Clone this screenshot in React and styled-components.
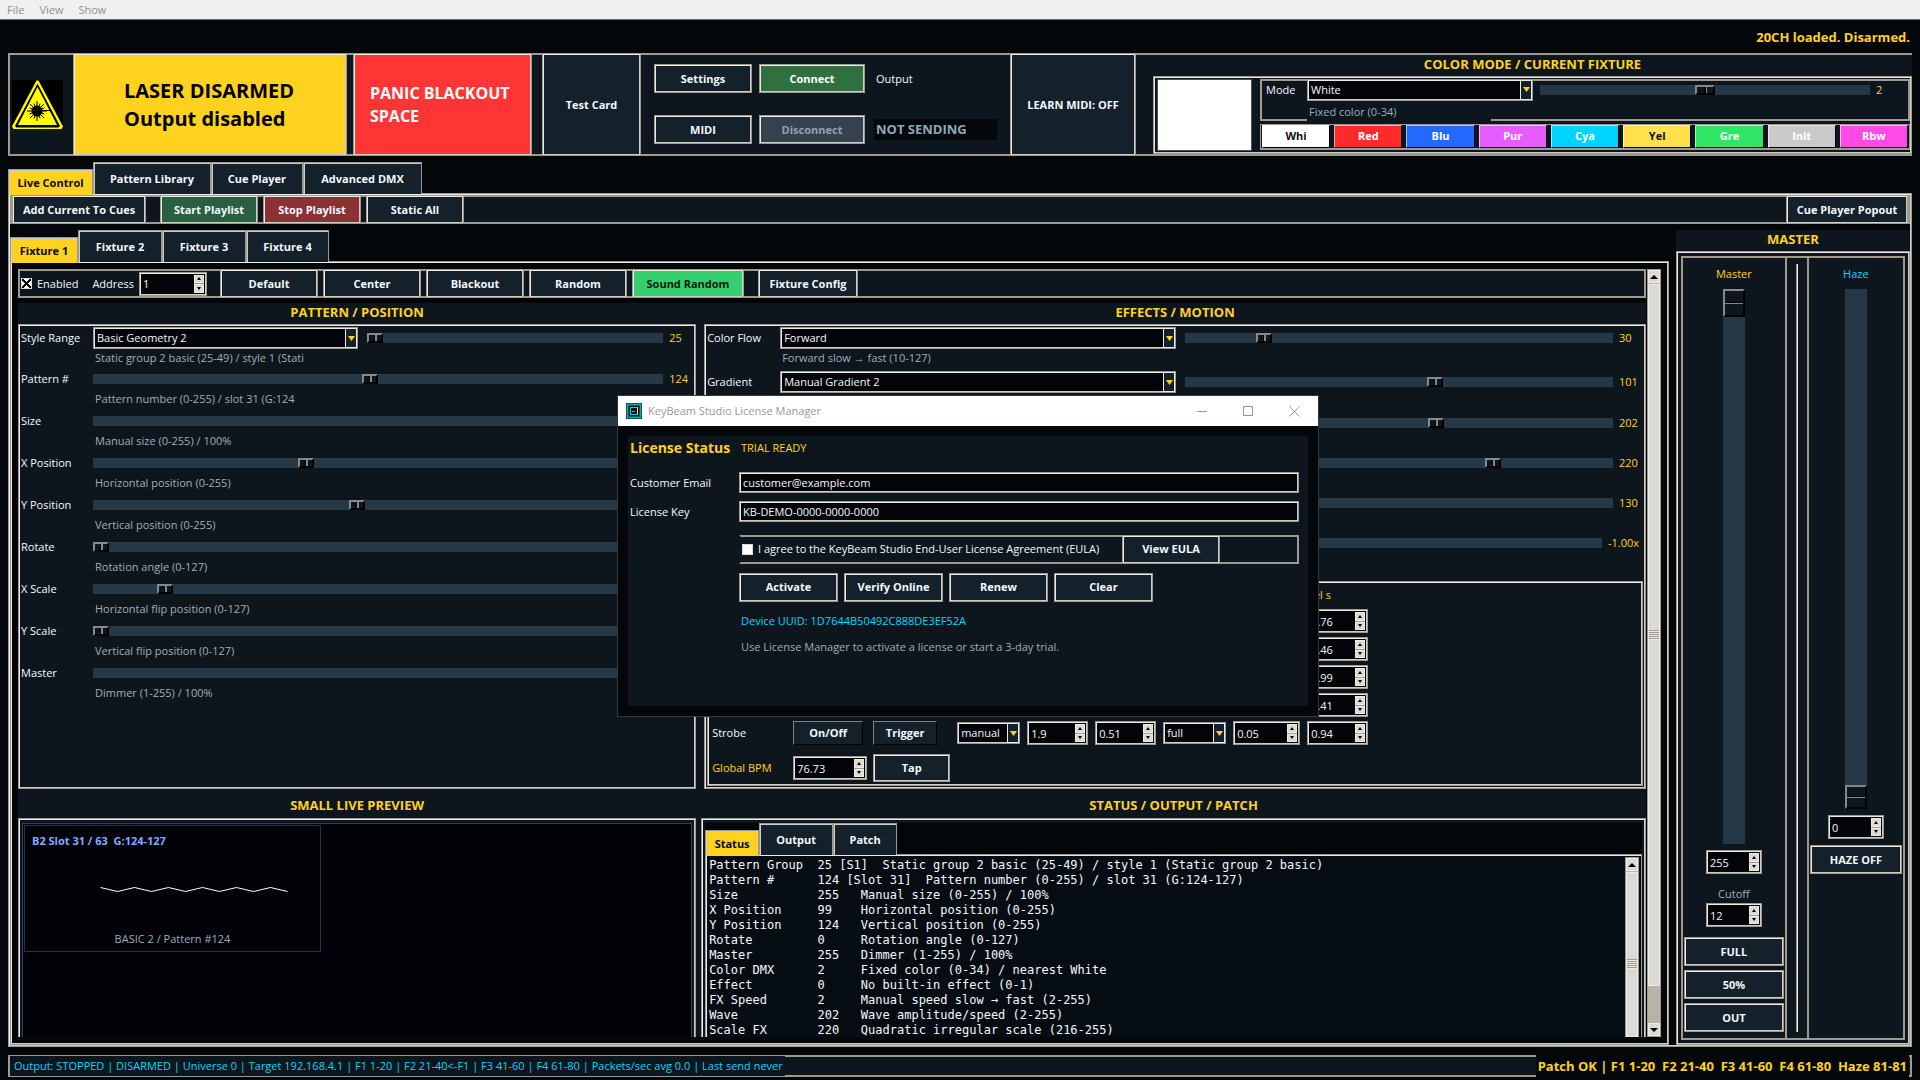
import React, { useId } from "react";
import styled, { createGlobalStyle, css } from "styled-components";

const c = {
  bg: "#03070a",
  panel: "#0e161d",
  field: "#020408",
  button: "#14202a",
  track: "#263746",
  edge: "#9e9a91",
  light: "#eeebe7",
  shade: "#cfcdc8",
  scroll: "#dcdad5",
  text: "#f2f9fd",
  muted: "#9dafbb",
  yellow: "#ffd21f",
  cyan: "#00d8ff",
};

const Global = createGlobalStyle`
  *, *::before, *::after { box-sizing: border-box; }
  body { margin: 0; background: ${c.bg}; overflow: hidden; }
  body, button, input, select, textarea {
    font-family: "Open Sans", "Noto Sans", sans-serif;
    font-size: 11px;
    line-height: 16px;
    color: ${c.text};
  }
`;

const bevel = css`
  border: 1px solid ${c.edge};
  box-shadow: inset 1px 1px ${c.light}, inset -1px -1px ${c.shade};
`;

const Page = styled.div`
  height: 100vh;
  display: flex;
  flex-direction: column;
`;

const MenuBar = styled.nav`
  height: 20px;
  display: flex;
  gap: 15px;
  padding: 0 7px;
  background: #f0f0f0;
  border-bottom: 1px solid #6d7271;
`;

const MenuItem = styled.button`
  border: 0;
  padding: 0;
  background: none;
  color: #8f8f8f;
`;

const LoadState = styled.div`
  height: 33px;
  padding: 9px 10px 0;
  text-align: right;
  font-size: 13px;
  font-weight: 700;
  color: ${c.yellow};
`;

const Header = styled.header`
  height: 103px;
  flex: none;
  margin: 0 8px;
  display: flex;
  background: ${c.panel};
  border: 2px solid ${c.edge};
`;

const Button = styled.button`
  ${bevel}
  height: ${(p) => p.$h || 28}px;
  width: ${(p) => (p.$w ? p.$w + "px" : "auto")};
  flex: none;
  padding: 0 4px;
  background: ${(p) => p.$bg || c.button};
  color: ${(p) => p.$fg || c.text};
  font-weight: 700;
  white-space: nowrap;
`;

const FlatButton = styled(Button)`
  border: 1px solid;
  border-color: #7c858b #000 #000 #7c858b;
  box-shadow: none;
`;

const LogoCell = styled.div`
  width: 63px;
  display: flex;
  align-items: center;
  padding-left: 2px;
`;

const BigButton = styled(Button)`
  height: auto;
  margin: -2px ${(p) => p.$gap || 0}px -2px 0;
`;

const ArmButton = styled(BigButton)`
  padding: 0 0 0 50px;
  text-align: left;
  font-size: 20px;
  line-height: 28px;
`;

const PanicButton = styled(BigButton)`
  padding: 0 0 0 16px;
  text-align: left;
  font-size: 16px;
  line-height: 23px;
`;

const OutputGrid = styled.div`
  width: 369px;
  display: grid;
  grid-template-columns: 98px 106px 125px;
  grid-template-rows: 29px 29px;
  gap: 22px 7px;
  align-items: center;
  padding: 9px 0 0 13px;
`;

const OutputLabel = styled.span`
  padding-left: 4px;
`;

const OutputState = styled.output`
  margin-left: 2px;
  height: 21px;
  padding-left: 2px;
  line-height: 21px;
  font-size: 13px;
  font-weight: 700;
  background: ${c.bg};
  color: #8fa9b8;
`;

const ColorPanel = styled.section`
  flex: 1;
  min-width: 0;
  padding-left: 17px;
  margin-right: -2px;
  display: flex;
  flex-direction: column;
`;

const Title = styled.h2`
  margin: 0;
  height: ${(p) => p.$h || 21}px;
  line-height: ${(p) => p.$lh || 18}px;
  text-align: center;
  font-size: 13px;
  font-weight: 700;
  color: ${c.yellow};
  background: ${c.panel};
`;

const ColorFrame = styled.div`
  ${bevel}
  height: 79px;
  display: flex;
  gap: 8px;
  padding: 2px 1px 2px 3px;
`;

const ColorSample = styled.div`
  width: 95px;
  background: #fff;
  border: 1px solid #3b5566;
`;

const ColorControls = styled.div`
  flex: 1;
  display: flex;
  flex-direction: column;
  gap: 3px;
`;

const ModeFrame = styled.div`
  height: 42px;
  border: 2px solid ${c.edge};
`;

const ModeRow = styled.div`
  display: grid;
  grid-template-columns: 45px 226px 1fr 38px;
  align-items: center;
  height: 22px;
  margin-top: -2px;
`;

const ModeLabel = styled.label`
  padding-left: 4px;
`;

const ModeHint = styled.div`
  position: relative;
  width: 184px;
  height: 20px;
  margin-left: 45px;
  padding-left: 2px;
  line-height: 22px;
  color: ${c.muted};
  background: ${c.panel};
`;

const SliderSlot = styled.div`
  padding-left: 7px;
`;

const Swatches = styled.div`
  height: 26px;
  display: flex;
  gap: 4px;
  padding: 0 1px;
  border: 1px solid ${c.edge};
  border-bottom-width: 2px;
`;

const Swatch = styled.button`
  flex: 1;
  padding: 0;
  font-weight: 700;
  background: ${(p) => p.$bg};
  color: ${(p) => p.$fg || "#fff"};
  border: 1px solid;
  border-color: #ffffff99 #000 #000 #ffffff99;
`;

/* Notebook tabs */
const Tabs = styled.div`
  display: flex;
  align-items: flex-end;
  height: 31px;
`;

const Tab = styled.button`
  height: ${(p) => (p.$on ? 26 : 32)}px;
  width: ${(p) => p.$w}px;
  padding: 0;
  margin-bottom: ${(p) => (p.$on ? -2 : -1)}px;
  position: relative;
  z-index: ${(p) => (p.$on ? 1 : 0)};
  border: 1px solid ${c.edge};
  border-bottom: 0;
  box-shadow: inset 1px 1px ${c.shade};
  font-weight: 700;
  background: ${(p) => (p.$on ? c.yellow : c.button)};
  color: ${(p) => (p.$on ? "#0a0a0a" : c.text)};
`;

const Notebook = styled.main`
  flex: 1;
  min-height: 0;
  margin: 6px 8px 8px;
  display: flex;
  flex-direction: column;
`;

const NotebookBody = styled.div`
  ${bevel}
  flex: 1;
  min-height: 0;
  display: flex;
  flex-direction: column;
  padding: 1px;
`;

const Toolbar = styled.div`
  height: 29px;
  flex: none;
  display: flex;
  background: ${c.panel};
  border: 2px solid ${c.edge};
  & > button { margin-top: -2px; margin-bottom: -2px; height: 29px; }
`;

const Gap = styled.div`
  flex: ${(p) => (p.$w ? "none" : 1)};
  width: ${(p) => p.$w || 0}px;
`;

const Work = styled.div`
  flex: 1;
  min-height: 0;
  display: flex;
  gap: 7px;
  padding-top: 6px;
`;

const FixtureBook = styled.div`
  flex: 1;
  min-width: 0;
  display: flex;
  flex-direction: column;
`;

const FixtureBody = styled.div`
  ${bevel}
  flex: 1;
  min-height: 0;
  display: flex;
  gap: 1px;
  padding: 7px;
`;

const Scrolled = styled.div`
  flex: 1;
  min-width: 0;
  display: flex;
  flex-direction: column;
  overflow: hidden;
`;

const CheckLabel = styled.label`
  display: flex;
  align-items: center;
  gap: 5px;
  padding-left: 1px;
  white-space: nowrap;
`;

const Check = styled.input`
  appearance: none;
  margin: 0;
  width: 11px;
  height: 11px;
  background: #fff;
  border: 1px solid ${c.scroll};
  &:checked {
    background:
      linear-gradient(45deg, transparent 40%, #000 40% 60%, transparent 60%),
      linear-gradient(-45deg, #fff 40%, #000 40% 60%, #fff 60%);
  }
`;

const FieldLine = styled.div`
  display: flex;
  align-items: center;
  gap: 5px;
`;

const Quadrants = styled.div`
  flex: 1;
  min-height: 0;
  margin-top: 5px;
  display: grid;
  grid-template-columns: 18fr 25fr;
  grid-template-rows: 486px 1fr;
  column-gap: 8px;
  background: ${c.panel};
`;

const Quadrant = styled.section`
  min-width: 0;
  min-height: 0;
  display: flex;
  flex-direction: column;
`;

const StatusQuadrant = styled(Quadrant)`
  margin-left: -3px;
`;

const Frame = styled.div`
  ${bevel}
  flex: 1;
  min-height: 0;
  padding: 1px;
  display: flex;
  flex-direction: column;
`;

const OpenFrame = styled(Frame)`
  border-bottom: 0;
  box-shadow: inset 1px 1px ${c.light}, inset -1px 0 ${c.shade};
  padding: 4px 3px 0;
`;

const Row = styled.div`
  height: ${(p) => p.$h || 42}px;
  flex: none;
  display: grid;
  grid-template-columns: ${(p) => p.$label || 73}px ${(p) => (p.$pick ? p.$pick + "px 9px" : "")} 1fr ${(p) => p.$val || 31}px;
  grid-template-rows: 24px 16px;
  align-items: center;
`;

const RowHint = styled.div`
  grid-column: 2 / -1;
  padding-left: 2px;
  white-space: nowrap;
  color: ${c.muted};
`;

const RowLabel = styled.label`
  padding-left: 1px;
  white-space: nowrap;
`;

const GoldLabel = styled.label`
  white-space: nowrap;
  color: ${c.yellow};
`;

const Value = styled.span`
  padding-left: 6px;
  color: ${c.yellow};
  white-space: nowrap;
`;

const thumb = css`
  appearance: none;
  border: 2px solid;
  border-color: #85898c #000 #000 #85898c;
  border-radius: 0;
`;

const HRange = styled.input`
  appearance: none;
  display: block;
  width: 100%;
  min-width: 0;
  height: 10px;
  margin: 0;
  background: ${c.track};
  &::-webkit-slider-thumb {
    ${thumb}
    width: ${(p) => p.$thumb || 16}px;
    height: 10px;
    background: linear-gradient(90deg, transparent 45%, #000 45% 54%, #85898c 54% 63%, transparent 63%) ${c.panel};
  }
`;

const VRange = styled.input`
  appearance: none;
  writing-mode: vertical-lr;
  direction: rtl;
  flex: 1;
  min-height: 0;
  width: 22px;
  margin: 0;
  background: ${c.track};
  &::-webkit-slider-thumb {
    ${thumb}
    width: 22px;
    height: ${(p) => p.$thumb}px;
    background: linear-gradient(transparent 45%, #000 45% 50%, #85898c 50% 55%, transparent 55%) ${c.panel};
  }
`;

const SelectBox = styled.div`
  ${bevel}
  position: relative;
  width: ${(p) => (p.$w ? p.$w + "px" : "100%")};
  height: 22px;
  background: ${c.field};
  & > select {
    appearance: none;
    width: 100%;
    height: 20px;
    border: 0;
    padding: 0 14px 0 3px;
    background: none;
    outline: 0;
  }
  & > span {
    position: absolute;
    top: 0;
    right: 0;
    width: 12px;
    height: 20px;
    display: grid;
    place-items: center;
    background: ${c.button};
    border: 1px solid ${c.light};
    pointer-events: none;
  }
`;

const Pick = ({ id, value, w, label }) => (
  <SelectBox $w={w}>
    <select id={id} aria-label={label} defaultValue={value}>
      <option>{value}</option>
    </select>
    <span>
      <svg width="7" height="5" viewBox="0 0 7 5"><path d="M0 0h7L3.5 5z" fill={c.yellow} /></svg>
    </span>
  </SelectBox>
);

const SpinBox = styled.div`
  ${bevel}
  width: ${(p) => p.$w}px;
  height: 24px;
  flex: none;
  display: flex;
  padding: 2px;
  background: ${c.field};
  & > input {
    flex: 1;
    min-width: 0;
    width: 0;
    height: 18px;
    border: 0;
    padding: 0 1px;
    background: none;
    outline: 0;
  }
`;

const SpinArrows = styled.div`
  width: 10px;
  display: flex;
  flex-direction: column;
  gap: 1px;
  background: ${c.edge};
  & > button {
    flex: 1;
    display: grid;
    place-items: center;
    padding: 0;
    border: 1px solid ${c.light};
    background: ${c.scroll};
  }
`;

const Spin = ({ id, value, w, label }) => (
  <SpinBox $w={w}>
    <input id={id} aria-label={label} defaultValue={value} />
    <SpinArrows>
      <button aria-label="Increase"><svg width="4" height="3" viewBox="0 0 4 3"><path d="M0 3h4L2 0z" /></svg></button>
      <button aria-label="Decrease"><svg width="4" height="3" viewBox="0 0 4 3"><path d="M0 0h4L2 3z" /></svg></button>
    </SpinArrows>
  </SpinBox>
);

const ScrollBar = styled.div`
  width: 14px;
  flex: none;
  display: flex;
  flex-direction: column;
  background: #b8b3a8;
  border: 1px solid ${c.edge};
  border-bottom-width: ${(p) => (p.$cut ? 0 : 1)}px;
`;

const ScrollArrow = styled.button`
  height: 13px;
  padding: 0;
  display: grid;
  place-items: center;
  background: ${c.scroll};
  border: 1px solid ${c.light};
`;

const ScrollThumb = styled.div`
  flex: 1;
  margin: 1px 0 ${(p) => p.$rest}px;
  display: grid;
  justify-items: center;
  align-items: start;
  padding-top: ${(p) => p.$grip}px;
  background: ${c.scroll};
  border: 1px solid ${c.light};
  &::after {
    content: "";
    width: 100%;
    height: 10px;
    background: repeating-linear-gradient(${c.edge} 0 1px, ${c.light} 1px 2px);
  }
`;

const Arrow = ({ down }) => (
  <svg width="8" height="4" viewBox="0 0 8 4"><path d={down ? "M0 0h8L4 4z" : "M0 4h8L4 0z"} /></svg>
);

const Envelope = styled.div`
  ${bevel}
  flex: 1;
  margin: 10px 1px 1px;
  padding: 2px 4px 0;
`;

const EnvelopeGrid = styled.div`
  display: grid;
  grid-template-columns: 81px 80px 84px 70px 68px 68px 70px 74px 61px;
  grid-template-rows: 21px repeat(5, 24px);
  row-gap: 4px;
  align-items: center;
`;

const TempoRow = styled.div`
  display: grid;
  grid-template-columns: 81px 80px 77px;
  align-items: center;
  margin-top: 9px;
`;

const LastColumn = styled.div`
  grid-column: 9;
  color: ${c.yellow};
  white-space: nowrap;
`;

const Canvas = styled.div`
  flex: 1;
  min-height: 0;
  padding: 1px;
  background: #000208;
  border: 1px solid #2c4256;
  border-bottom: 0;
`;

const SlotCard = styled.figure`
  width: 297px;
  height: 127px;
  margin: 0;
  padding: 7px 7px 4px;
  border: 1px solid #22344a;
  display: flex;
  flex-direction: column;
  justify-content: space-between;
`;

const SlotName = styled.div`
  white-space: pre;
  font-weight: 700;
  color: #82acff;
`;

const SlotCaption = styled.figcaption`
  text-align: center;
  color: ${c.muted};
`;

const StatusBook = styled.div`
  flex: 1;
  min-height: 0;
  display: flex;
  flex-direction: column;
  background: ${c.bg};
`;

const LogBody = styled.div`
  flex: 1;
  min-height: 0;
  display: flex;
  border: 1px solid ${c.edge};
  border-bottom: 0;
  box-shadow: inset 1px 1px ${c.light};
  padding: 2px 2px 0 2px;
  background: #050c12;
`;

const Log = styled.pre`
  flex: 1;
  min-width: 0;
  margin: 0;
  padding: 1px 0 0 1px;
  overflow: hidden;
  font-family: "DejaVu Sans Mono", "Liberation Mono", monospace;
  font-size: 12px;
  line-height: 15px;
`;

const MasterPanel = styled.aside`
  width: 234px;
  flex: none;
  display: flex;
  flex-direction: column;
`;

const MasterFrame = styled.div`
  ${bevel}
  flex: 1;
  min-height: 0;
  padding: 4px;
  display: flex;
  background: ${c.panel};
`;

const Strip = styled.div`
  flex: ${(p) => p.$grow};
  display: flex;
  flex-direction: column;
  align-items: center;
  padding: 8px 1px ${(p) => p.$bottom}px;
  border: 2px solid ${c.edge};
  & > button { width: 100%; height: 29px; }
`;

const StripLabel = styled.label`
  color: ${(p) => p.$fg};
  margin-bottom: ${(p) => p.$gap}px;
`;

const Space = styled.div`
  height: ${(p) => p.$h}px;
  flex: none;
`;

const Divider = styled.div`
  width: 20px;
  padding: 6px 9px;
  border: solid ${c.edge};
  border-width: 2px 0;
  &::before {
    content: "";
    display: block;
    width: 2px;
    height: 100%;
    background: ${c.light};
    border-left: 1px solid ${c.edge};
  }
`;

const Footer = styled.footer`
  height: 22px;
  flex: none;
  margin: 0 8px 3px;
  display: flex;
  justify-content: space-between;
  background: ${c.panel};
  border: 2px solid ${c.edge};
`;

const FooterLeft = styled.div`
  margin: -1px 0;
  padding: 0 2px 0 4px;
  line-height: 20px;
  color: ${c.cyan};
  background: ${c.panel};
`;

const FooterRight = styled.div`
  margin: -2px 1px -2px 0;
  padding: 0 2px;
  line-height: 22px;
  white-space: pre;
  font-size: 13px;
  font-weight: 700;
  color: ${c.yellow};
  background: ${c.bg};
`;

/* License window */
const Dialog = styled.div`
  position: absolute;
  left: 617px;
  top: 395px;
  width: 702px;
  height: 322px;
  display: flex;
  flex-direction: column;
  background: ${c.bg};
  border: 1px solid #33383c;
`;

const TitleBar = styled.div`
  height: 30px;
  display: flex;
  align-items: center;
  padding-left: 8px;
  gap: 6px;
  background: #fff;
  color: #999;
`;

const WindowButtons = styled.div`
  display: flex;
  padding-right: 1px;
  & > button {
    width: 46px;
    height: 30px;
    padding: 0;
    border: 0;
    background: none;
    display: grid;
    place-items: center;
  }
`;

const DialogBody = styled.div`
  flex: 1;
  margin: 10px;
  padding: 0 9px 0 2px;
  background: ${c.panel};
  display: grid;
  grid-template-columns: 109px 1fr;
  grid-template-rows: 32px 29px 29px 46px 30px 38px 14px;
  align-items: center;
  align-content: start;
`;

const DialogHeading = styled.h1`
  margin: 0 0 8px;
  font-size: 14px;
  line-height: 24px;
  font-weight: 700;
  color: ${c.yellow};
  white-space: nowrap;
`;

const DialogText = styled.div`
  grid-column: 2;
  padding-left: 2px;
  color: ${(p) => p.$fg};
`;

const TrialState = styled(DialogText)`
  margin-bottom: 8px;
`;

const TextField = styled.input`
  ${bevel}
  height: 21px;
  padding: 0 3px;
  background: ${c.field};
  outline: 0;
`;

const AgreeRow = styled(Toolbar)`
  grid-column: 2;
  border-left-color: ${c.panel};
`;

const ButtonRow = styled.div`
  grid-column: 2;
  display: flex;
  gap: 6px;
`;

const SliderRow = ({ label, pick, value, hint, h, min = 0, max = 255, at, hideLabel, pickWidth, labelWidth, valWidth }) => {
  const id = useId();
  const named = !pick && !hideLabel;
  return (
    <Row $h={h} $pick={pick ? pickWidth : 0} $label={labelWidth} $val={valWidth}>
      {hideLabel ? <span /> : <RowLabel htmlFor={id}>{label}</RowLabel>}
      {pick && <Pick id={id} value={pick} />}
      {pick && <span />}
      <HRange id={named ? id : undefined} aria-label={named ? undefined : label}
        type="range" min={min} max={max} defaultValue={at} />
      <Value>{value}</Value>
      {hint && <RowHint>{hint}</RowHint>}
    </Row>
  );
};

const swatches = [
  ["Whi", "#ffffff", "#111"], ["Red", "#ff2a2a"], ["Blu", "#2469ff"], ["Pur", "#e65cff"], ["Cya", "#00d4ff"],
  ["Yel", "#ffe14a", "#111"], ["Gre", "#30e667"], ["Init", "#c9c9c9"], ["Rbw", "#ff4ae6"],
];

const positionRows = [
  { label: "Pattern #", at: 124, value: "124", hint: "Pattern number (0-255) / slot 31 (G:124" },
  { label: "Size", at: 255, hint: "Manual size (0-255) / 100%" },
  { label: "X Position", at: 99, max: 267, hint: "Horizontal position (0-255)" },
  { label: "Y Position", at: 124, max: 268, hint: "Vertical position (0-255)" },
  { label: "Rotate", at: 0, max: 127, hint: "Rotation angle (0-127)" },
  { label: "X Scale", at: 15, max: 130, hint: "Horizontal flip position (0-127)" },
  { label: "Y Scale", at: 0, max: 127, hint: "Vertical flip position (0-127)" },
  { label: "Master", at: 255, hint: "Dimmer (1-255) / 100%" },
];

const log = `Pattern Group  25 [S1]  Static group 2 basic (25-49) / style 1 (Static group 2 basic)
Pattern #      124 [Slot 31]  Pattern number (0-255) / slot 31 (G:124-127)
Size           255   Manual size (0-255) / 100%
X Position     99    Horizontal position (0-255)
Y Position     124   Vertical position (0-255)
Rotate         0     Rotation angle (0-127)
Master         255   Dimmer (1-255) / 100%
Color DMX      2     Fixed color (0-34) / nearest White
Effect         0     No built-in effect (0-1)
FX Speed       2     Manual speed slow → fast (2-255)
Wave           202   Wave amplitude/speed (2-255)
Scale FX       220   Quadratic irregular scale (216-255)`;

const rays = Array.from({ length: 16 }, (_, i) => {
  const a = (i * Math.PI) / 8;
  const r = i % 2 ? 8 : 10;
  return `M25 31L${25 + r * Math.cos(a)} ${31 + r * Math.sin(a)}`;
}).join("");

const LaserSign = () => (
  <svg width="51" height="49" viewBox="0 0 51 49">
    <rect width="51" height="49" fill="#000" />
    <path d="M24.500 .5h2L51 46.500 49.500 49H1.500L0 46.500z" fill="#ffff00" />
    <path d="M25.500 3.500 48 46 46.500 47.500H4.500L3 46z" fill="#000" />
    <path d="M25.500 7 45 45H6z" fill="#ffff00" />
    <path d={rays} stroke="#000" strokeWidth="1" />
    <path d="M25 30.500H40" stroke="#000" strokeWidth="1" />
    <circle cx="25" cy="31" r="5.500" fill="#000" />
  </svg>
);

const AppIcon = () => (
  <svg width="16" height="16" viewBox="0 0 16 16">
    <rect width="16" height="16" fill="#06131a" />
    <rect x="1.500" y="1.500" width="13" height="13" fill="none" stroke="#16a79b" strokeWidth="2" />
    <rect x="4.500" y="4.500" width="7" height="7" fill="none" stroke="#00cfff" />
    <path d="M6 8.500h3" stroke="#00cfff" />
    <path d="M11.500 4v8" stroke="#ffe14a" />
  </svg>
);

const LicenseDialog = () => (
  <Dialog role="dialog" aria-label="KeyBeam Studio License Manager">
    <TitleBar>
      <AppIcon />
      <span>KeyBeam Studio License Manager</span>
      <Gap />
      <WindowButtons>
        <button aria-label="Minimize"><svg width="10" height="10"><path d="M0 5.500h10" stroke="#999" /></svg></button>
        <button aria-label="Maximize"><svg width="10" height="10"><rect x=".5" y=".5" width="9" height="9" fill="none" stroke="#999" /></svg></button>
        <button aria-label="Close"><svg width="11" height="11"><path d="M.5 .5l10 10M10.500 .5l-10 10" stroke="#999" /></svg></button>
      </WindowButtons>
    </TitleBar>
    <DialogBody>
      <DialogHeading>License Status</DialogHeading>
      <TrialState $fg={c.yellow}>TRIAL READY</TrialState>
      <label htmlFor="email">Customer Email</label>
      <TextField id="email" defaultValue="customer@example.com" />
      <label htmlFor="key">License Key</label>
      <TextField id="key" defaultValue="KB-DEMO-0000-0000-0000" />
      <AgreeRow>
        <CheckLabel>
          <Check type="checkbox" />I agree to the KeyBeam Studio End-User License Agreement (EULA)
        </CheckLabel>
        <Gap />
        <Button $w={98}>View EULA</Button>
        <Gap $w={77} />
      </AgreeRow>
      <ButtonRow>
        {["Activate", "Verify Online", "Renew", "Clear"].map((t) => <Button key={t} $w={99} $h={29}>{t}</Button>)}
      </ButtonRow>
      <DialogText $fg={c.cyan}>Device UUID: 1D7644B50492C888DE3EF52A</DialogText>
      <DialogText $fg={c.muted}>Use License Manager to activate a license or start a 3-day trial.</DialogText>
    </DialogBody>
  </Dialog>
);

export default function App() {
  return (
    <Page>
      <Global />
      <MenuBar>
        <MenuItem>File</MenuItem>
        <MenuItem>View</MenuItem>
        <MenuItem>Show</MenuItem>
      </MenuBar>
      <LoadState>20CH loaded. Disarmed.</LoadState>

      <Header>
        <LogoCell><LaserSign /></LogoCell>
        <ArmButton $w={274} $gap={6} $bg={c.yellow} $fg="#000">LASER DISARMED<br />Output disabled</ArmButton>
        <PanicButton $w={179} $gap={10} $bg="#ff3535" $fg="#fff">PANIC BLACKOUT<br />SPACE</PanicButton>
        <BigButton $w={99}>Test Card</BigButton>
        <OutputGrid>
          <Button $h={29}>Settings</Button>
          <Button $h={29} $bg="#2f7041" $fg="#fff">Connect</Button>
          <OutputLabel>Output</OutputLabel>
          <Button $h={29}>MIDI</Button>
          <Button $h={29} $bg="#34424e" $fg="#8fa3b0">Disconnect</Button>
          <OutputState>NOT SENDING</OutputState>
        </OutputGrid>
        <BigButton $w={126}>LEARN MIDI: OFF</BigButton>
        <ColorPanel>
          <Title>COLOR MODE / CURRENT FIXTURE</Title>
          <ColorFrame>
            <ColorSample />
            <ColorControls>
              <ModeFrame>
                <ModeRow>
                  <ModeLabel htmlFor="mode">Mode</ModeLabel>
                  <Pick id="mode" value="White" />
                  <SliderSlot><HRange $thumb={20} type="range" min="0" max="4" defaultValue="2" aria-label="Color value" /></SliderSlot>
                  <Value>2</Value>
                </ModeRow>
                <ModeHint>Fixed color (0-34)</ModeHint>
              </ModeFrame>
              <Swatches>
                {swatches.map(([t, bg, fg]) => <Swatch key={t} $bg={bg} $fg={fg}>{t}</Swatch>)}
              </Swatches>
            </ColorControls>
          </ColorFrame>
        </ColorPanel>
      </Header>

      <Notebook>
        <Tabs>
          <Tab $on $w={85}>Live Control</Tab>
          <Tab $w={118}>Pattern Library</Tab>
          <Tab $w={92}>Cue Player</Tab>
          <Tab $w={119}>Advanced DMX</Tab>
        </Tabs>
        <NotebookBody>
          <Toolbar>
            <Button $w={134}>Add Current To Cues</Button>
            <Gap $w={14} />
            <Button $w={98} $bg="#2a6041">Start Playlist</Button>
            <Gap $w={5} />
            <Button $w={98} $bg="#8c3033">Stop Playlist</Button>
            <Gap $w={5} />
            <Button $w={98}>Static All</Button>
            <Gap />
            <Button $w={122}>Cue Player Popout</Button>
          </Toolbar>
          <Work>
            <FixtureBook>
              <Tabs>
                <Tab $on $w={68}>Fixture 1</Tab>
                <Tab $w={84}>Fixture 2</Tab>
                <Tab $w={84}>Fixture 3</Tab>
                <Tab $w={83}>Fixture 4</Tab>
              </Tabs>
              <FixtureBody>
                <Scrolled>
                  <Toolbar>
                    <CheckLabel><Check type="checkbox" defaultChecked />Enabled</CheckLabel>
                    <Gap $w={14} />
                    <FieldLine>
                      <label htmlFor="address">Address</label>
                      <Spin id="address" value="1" w={68} />
                    </FieldLine>
                    <Gap $w={13} />
                    <Button $w={98}>Default</Button>
                    <Gap $w={5} />
                    <Button $w={98}>Center</Button>
                    <Gap $w={5} />
                    <Button $w={98}>Blackout</Button>
                    <Gap $w={5} />
                    <Button $w={98}>Random</Button>
                    <Gap $w={5} />
                    <Button $w={112} $bg="#36cf70" $fg="#0a1a10">Sound Random</Button>
                    <Gap $w={14} />
                    <Button $w={100}>Fixture Config</Button>
                  </Toolbar>
                  <Quadrants>
                    <Quadrant>
                      <Title>PATTERN / POSITION</Title>
                      <Frame>
                        <SliderRow h={41} label="Style Range" pick="Basic Geometry 2" pickWidth={265} value="25"
                          min={25} max={49} at={25} hint="Static group 2 basic (25-49) / style 1 (Stati" />
                        {positionRows.map((r) => <SliderRow key={r.label} {...r} />)}
                      </Frame>
                    </Quadrant>
                    <Quadrant>
                      <Title>EFFECTS / MOTION</Title>
                      <Frame>
                        <SliderRow h={44} label="Color Flow" pick="Forward" pickWidth={396} labelWidth={74} value="30"
                          min={10} max={127} at={30} hint="Forward slow → fast (10-127)" />
                        <SliderRow h={41} label="Gradient" pick="Manual Gradient 2" pickWidth={396} labelWidth={74}
                          value="101" max={172} at={101} />
                        <SliderRow h={40} label="Wave" hideLabel labelWidth={479} value="202" max={343} at={202} />
                        <SliderRow h={40} label="Scale FX" hideLabel labelWidth={479} value="220" max={302} at={220} />
                        <SliderRow h={40} label="Motion" hideLabel labelWidth={479} value="130" at={0} />
                        <SliderRow h={40} label="Rate" hideLabel labelWidth={479} valWidth={42} value="-1.00x" at={0} />
                        <Envelope>
                          <EnvelopeGrid>
                            <LastColumn>Rel s</LastColumn>
                            {["0.76", "0.46", "0.99", "0.41"].map((v) => (
                              <LastColumn key={v}><Spin value={v} w={61} label="Release seconds" /></LastColumn>
                            ))}
                            <span>Strobe</span>
                            <FlatButton $w={70} $h={24}>On/Off</FlatButton>
                            <FlatButton $w={64} $h={24}>Trigger</FlatButton>
                            <Pick value="manual" w={63} label="Strobe mode" />
                            <Spin value="1.9" w={61} label="Strobe rate" />
                            <Spin value="0.51" w={61} label="Strobe duty" />
                            <Pick value="full" w={63} label="Strobe range" />
                            <Spin value="0.05" w={67} label="Strobe attack" />
                            <Spin value="0.94" w={61} label="Strobe release" />
                          </EnvelopeGrid>
                          <TempoRow>
                            <GoldLabel htmlFor="bpm">Global BPM</GoldLabel>
                            <Spin id="bpm" value="76.73" w={74} />
                            <Button $w={77}>Tap</Button>
                          </TempoRow>
                        </Envelope>
                      </Frame>
                    </Quadrant>
                    <Quadrant>
                      <Title $h={29} $lh={33}>SMALL LIVE PREVIEW</Title>
                      <OpenFrame>
                        <Canvas>
                          <SlotCard>
                            <SlotName>B2 Slot 31 / 63  G:124-127</SlotName>
                            <svg width="262" height="6" viewBox="0 0 262 6">
                              <path d="M68.500 .5l17 4 17-4 17 4 17-4 17 4 17-4 17 4 17-4 17 4 17-4 17 4" fill="none" stroke="#fff" />
                            </svg>
                            <SlotCaption>BASIC 2 / Pattern #124</SlotCaption>
                          </SlotCard>
                        </Canvas>
                      </OpenFrame>
                    </Quadrant>
                    <StatusQuadrant>
                      <Title $h={29} $lh={33}>STATUS / OUTPUT / PATCH</Title>
                      <OpenFrame>
                        <StatusBook>
                          <Tabs>
                            <Tab $on $w={54}>Status</Tab>
                            <Tab $w={74}>Output</Tab>
                            <Tab $w={64}>Patch</Tab>
                          </Tabs>
                          <LogBody>
                            <Log>{log}</Log>
                            <ScrollBar $cut>
                              <ScrollArrow aria-label="Scroll up"><Arrow /></ScrollArrow>
                              <ScrollThumb $grip={86} $rest={0} />
                            </ScrollBar>
                          </LogBody>
                        </StatusBook>
                      </OpenFrame>
                    </StatusQuadrant>
                  </Quadrants>
                </Scrolled>
                <ScrollBar>
                  <ScrollArrow aria-label="Scroll up"><Arrow /></ScrollArrow>
                  <ScrollThumb $grip={345} $rest={37} />
                  <ScrollArrow aria-label="Scroll down"><Arrow down /></ScrollArrow>
                </ScrollBar>
              </FixtureBody>
            </FixtureBook>

            <MasterPanel>
              <Title>MASTER</Title>
              <MasterFrame>
                <Strip $grow="106" $bottom={6}>
                  <StripLabel htmlFor="master" $fg={c.yellow} $gap={7}>Master</StripLabel>
                  <VRange id="master" $thumb={28} type="range" min="0" max="255" defaultValue="255" />
                  <Space $h={6} />
                  <Spin value="255" w={56} label="Master level" />
                  <Space $h={12} />
                  <StripLabel htmlFor="cutoff" $fg={c.muted} $gap={1}>Cutoff</StripLabel>
                  <Spin id="cutoff" value="12" w={56} />
                  <Space $h={10} />
                  <Button>FULL</Button>
                  <Space $h={4} />
                  <Button>50%</Button>
                  <Space $h={4} />
                  <Button>OUT</Button>
                </Strip>
                <Divider />
                <Strip $grow="98" $bottom={164}>
                  <StripLabel htmlFor="haze" $fg={c.cyan} $gap={7}>Haze</StripLabel>
                  <VRange id="haze" $thumb={24} type="range" min="0" max="255" defaultValue="0" />
                  <Space $h={6} />
                  <Spin value="0" w={56} label="Haze level" />
                  <Space $h={6} />
                  <Button>HAZE OFF</Button>
                </Strip>
              </MasterFrame>
            </MasterPanel>
          </Work>
        </NotebookBody>
      </Notebook>

      <Footer>
        <FooterLeft>
          Output: STOPPED | DISARMED | Universe 0 | Target 192.168.4.1 | F1 1-20 | F2 21-40&lt;-F1 | F3 41-60 | F4 61-80 | Packets/sec avg 0.0 | Last send never
        </FooterLeft>
        <FooterRight>Patch OK | F1 1-20  F2 21-40  F3 41-60  F4 61-80  Haze 81-81</FooterRight>
      </Footer>

      <LicenseDialog />
    </Page>
  );
}
